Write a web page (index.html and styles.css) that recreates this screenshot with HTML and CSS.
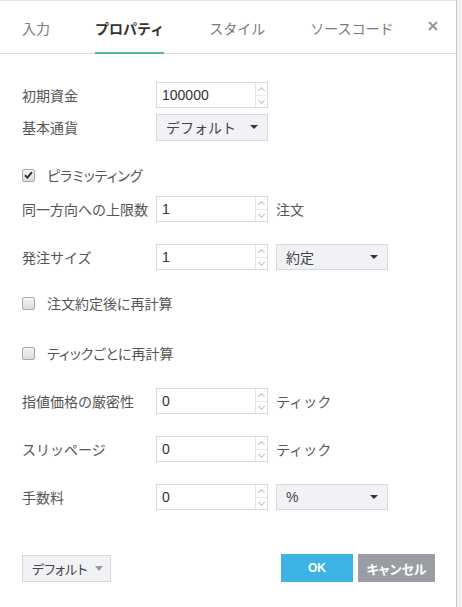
FILE: index.html
```html
<!DOCTYPE html>
<html lang="ja">
<head>
<meta charset="utf-8">
<link rel="stylesheet" href="styles.css">
</head>
<body>
<div class="dialog">
  <div class="tabs">
    <div class="tab-group">
      <div class="tab">入力</div>
      <div class="tab active">プロパティ</div>
      <div class="tab">スタイル</div>
      <div class="tab">ソースコード</div>
    </div>
    <div class="close">
      <svg width="10" height="10" viewBox="0 0 10 10"><path d="M1 1L9 9M9 1L1 9" stroke="#9a9a9a" stroke-width="2.2" fill="none"/></svg>
    </div>
  </div>

  <div class="content">
    <div class="row r-first">
      <div class="label">初期資金</div>
      <div class="num"><span class="val">100000</span><span class="spin"><i class="up"></i><i class="dn"></i></span></div>
    </div>
    <div class="row r-tight">
      <div class="label">基本通貨</div>
      <div class="select"><span class="stext">デフォルト</span><span class="caret"></span></div>
    </div>
    <div class="check-row r-c1">
      <span class="cb checked"><svg width="9" height="8" viewBox="0 0 9 8"><path d="M1 4.2L3.4 6.6L8 1.2" stroke="#333" stroke-width="2" fill="none"/></svg></span>
      <span class="ctext">ピラミッティング</span>
    </div>
    <div class="row r-after-check">
      <div class="label">同一方向への上限数</div>
      <div class="num"><span class="val">1</span><span class="spin"><i class="up"></i><i class="dn"></i></span></div>
      <div class="unit">注文</div>
    </div>
    <div class="row r-wide">
      <div class="label">発注サイズ</div>
      <div class="num"><span class="val">1</span><span class="spin"><i class="up"></i><i class="dn"></i></span></div>
      <div class="select sel2"><span class="stext">約定</span><span class="caret"></span></div>
    </div>
    <div class="check-row r-c2">
      <span class="cb"></span>
      <span class="ctext">注文約定後に再計算</span>
    </div>
    <div class="check-row r-c3">
      <span class="cb"></span>
      <span class="ctext">ティックごとに再計算</span>
    </div>
    <div class="row r-after-check2">
      <div class="label">指値価格の厳密性</div>
      <div class="num"><span class="val">0</span><span class="spin"><i class="up"></i><i class="dn"></i></span></div>
      <div class="unit">ティック</div>
    </div>
    <div class="row r-wide">
      <div class="label">スリッページ</div>
      <div class="num"><span class="val">0</span><span class="spin"><i class="up"></i><i class="dn"></i></span></div>
      <div class="unit">ティック</div>
    </div>
    <div class="row r-wide">
      <div class="label">手数料</div>
      <div class="num"><span class="val">0</span><span class="spin"><i class="up"></i><i class="dn"></i></span></div>
      <div class="select sel2"><span class="stext pct">%</span><span class="caret"></span></div>
    </div>
  </div>

  <div class="footer">
    <div class="defbtn"><span>デフォルト</span><span class="caret gray"></span></div>
    <div class="actions">
      <div class="btn ok">OK</div>
      <div class="btn cancel">キャンセル</div>
    </div>
  </div>
</div>
</body>
</html>
```

FILE: styles.css
```css
* { box-sizing: border-box; }
html, body { margin: 0; padding: 0; }
body {
  width: 462px;
  height: 607px;
  background: #f2f2f2;
  font-family: "Noto Sans CJK JP", "Liberation Sans", sans-serif;
  color: #555;
  font-size: 14px;
  overflow: hidden;
}
.dialog {
  width: 457px;
  height: 607px;
  background: #fff;
  border-top: 1px solid #e2e2e2;
  border-right: 1px solid #c8c8c8;
  display: flex;
  flex-direction: column;
}
.tabs {
  height: 53px;
  border-bottom: 1px solid #dcdcdc;
  display: flex;
  align-items: center;
  padding-left: 22px;
}
.tab-group {
  display: flex;
  gap: 45px;
  height: 52px;
}
.tab {
  color: #7a7a7a;
  font-size: 14px;
  line-height: 20px;
  height: 52px;
  display: flex;
  align-items: center;
  position: relative;
  padding-top: 1px;
  white-space: nowrap;
  flex-shrink: 0;
}
.tab.active {
  color: #333;
  font-weight: bold;
}
.tab.active::after {
  content: "";
  position: absolute;
  left: 0;
  right: 0;
  bottom: -1px;
  height: 2px;
  background: #55b886;
}
.close {
  margin-left: auto;
  margin-right: 18px;
  display: flex;
  align-items: center;
  flex-shrink: 0;
  margin-top: -3px;
}
.content {
  padding: 28px 0 0 22px;
}
.row {
  display: flex;
  align-items: center;
  height: 26px;
}
.r-tight { margin-top: 6px; }
.r-after-check { margin-top: 8px; }
.r-wide { margin-top: 22px; }
.r-after-check2 { margin-top: 22px; }
.label {
  width: 134px;
  white-space: nowrap;
  color: #555;
}
.num {
  width: 112px;
  height: 26px;
  border: 1px solid #dadada;
  display: flex;
  background: #fff;
}
.val {
  flex: 1;
  padding-left: 5px;
  font-family: "Liberation Sans", sans-serif;
  font-size: 14px;
  color: #333;
  line-height: 24px;
}
.spin {
  width: 12px;
  border-left: 1px solid #e4e4e4;
  display: flex;
  flex-direction: column;
}
.spin i {
  flex: 1;
  position: relative;
}
.spin i.up { border-bottom: 1px solid #ececec; }
.spin i::before {
  content: "";
  position: absolute;
  left: 3px;
  width: 4px;
  height: 4px;
  border-left: 1px solid #b5c3d3;
  border-top: 1px solid #b5c3d3;
}
.spin i.up::before { top: 5px; transform: rotate(45deg); }
.spin i.dn::before { top: 2px; transform: rotate(-135deg); }
.unit {
  margin-left: 8px;
  color: #555;
  white-space: nowrap;
}
.select {
  width: 112px;
  height: 27px;
  background: #f1f2f5;
  border: 1px solid #d8d9dd;
  display: flex;
  align-items: center;
  padding-left: 9px;
  padding-right: 9px;
  color: #444;
}
.sel2 { margin-left: 8px; height: 26px; }
.stext {
  flex: 1;
}
.pct { font-family: "Liberation Sans", sans-serif; }
.caret {
  width: 0;
  height: 0;
  border-left: 4px solid transparent;
  border-right: 4px solid transparent;
  border-top: 4px solid #333;
}
.caret.gray { border-top-color: #999; border-left-width: 4.5px; border-right-width: 4.5px; border-top-width: 5px; }
.check-row {
  display: flex;
  align-items: center;
  height: 26px;
}
.r-c1 { margin-top: 22px; }
.r-c2 { margin-top: 20px; }
.r-c3 { margin-top: 24px; }
.cb {
  width: 13px;
  height: 13px;
  border: 1px solid #a9a9a9;
  border-radius: 2px;
  background: linear-gradient(#f4f4f4, #dcdcdc);
  display: flex;
  align-items: center;
  justify-content: center;
}
.ctext {
  margin-left: 12px;
  font-feature-settings: "palt";
}
.footer {
  margin-top: 44px;
  padding: 0 21px 0 22px;
  display: flex;
  align-items: center;
}
.defbtn {
  width: 89px;
  height: 27px;
  background: #f1f2f5;
  border: 1px solid #d6d8dc;
  display: flex;
  align-items: center;
  padding-left: 9px;
  gap: 8px;
  font-size: 13px;
  color: #444;
  font-feature-settings: "palt";
}
.actions {
  margin-left: auto;
  display: flex;
  gap: 5px;
}
.btn {
  height: 28px;
  color: #fff;
  font-weight: bold;
  font-size: 12px;
  display: flex;
  align-items: center;
  justify-content: center;
  font-feature-settings: "palt";
}
.ok { width: 72px; background: #3bb4e5; font-family: "Liberation Sans", sans-serif; }
.cancel { width: 77px; background: #9a9da3; font-size: 13px; }
```
